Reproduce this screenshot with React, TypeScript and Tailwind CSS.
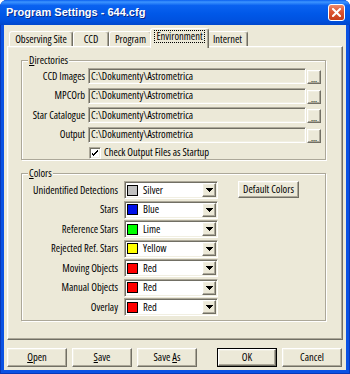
import React from "react"

const raised =
  "border border-t-white border-l-white border-r-[#716F64] border-b-[#716F64] shadow-[inset_-1px_-1px_0_#ACA899,inset_1px_1px_0_#F1EFE2]"
const sunken =
  "border border-t-[#ACA899] border-l-[#ACA899] border-r-white border-b-white shadow-[inset_1px_1px_0_#716F64,inset_-1px_-1px_0_#F1EFE2]"

const dirs = [
  { label: "CCD Images", value: "C:\\Dokumenty\\Astrometrica" },
  { label: "MPCOrb", value: "C:\\Dokumenty\\Astrometrica" },
  { label: "Star Catalogue", value: "C:\\Dokumenty\\Astrometrica" },
  { label: "Output", value: "C:\\Dokumenty\\Astrometrica" },
]

const colors = [
  { label: "Unidentified Detections", name: "Silver", swatch: "bg-[#C0C0C0]" },
  { label: "Stars", name: "Blue", swatch: "bg-[#0010E8]" },
  { label: "Reference Stars", name: "Lime", swatch: "bg-[#00FF00]" },
  { label: "Rejected Ref. Stars", name: "Yellow", swatch: "bg-[#FFFF00]" },
  { label: "Moving Objects", name: "Red", swatch: "bg-[#FF0000]" },
  { label: "Manual Objects", name: "Red", swatch: "bg-[#FF0000]" },
  { label: "Overlay", name: "Red", swatch: "bg-[#FF0000]" },
]

const tabs = [
  { label: "Observing Site", w: "w-[64px]" },
  { label: "CCD", w: "w-[36px]" },
  { label: "Program", w: "w-[43px]" },
  { label: "Environment", w: "w-[59px]", active: true },
  { label: "Internet", w: "w-[41px]" },
]

function Arrow() {
  return (
    <svg width="7" height="4" shapeRendering="crispEdges">
      <rect x="0" y="0" width="7" height="1" fill="#000" />
      <rect x="1" y="1" width="5" height="1" fill="#000" />
      <rect x="2" y="2" width="3" height="1" fill="#000" />
      <rect x="3" y="3" width="1" height="1" fill="#000" />
    </svg>
  )
}

function Button({ children, isDefault }: { children: React.ReactNode; isDefault?: boolean }) {
  if (isDefault) {
    return (
      <div className="w-[60px] h-[19px] border border-black flex">
        <div className={`flex-1 flex items-center justify-center ${raised}`}>{children}</div>
      </div>
    )
  }
  return <div className={`w-[60px] h-[19px] flex items-center justify-center ${raised}`}>{children}</div>
}

export default function App() {
  return (
    <div className="w-[350px] h-[374px] flex flex-col bg-[#0A52E3] rounded-t-[7px] overflow-hidden shadow-[inset_1px_0_0_#0838B8,inset_-1px_0_0_#0838B8,inset_0_-1px_0_#0838B8] font-['Open_Sans',sans-serif] [font-stretch:75%] text-[10.5px] leading-[13px] text-black whitespace-nowrap">
      {/* title bar */}
      <div className="h-[25px] shrink-0 flex items-center justify-between pl-[6px] pr-[5px] bg-[linear-gradient(to_bottom,#0A5FEF_0%,#3D95FF_8%,#0A62F0_22%,#0058E8_55%,#0052E0_80%,#0047CC_100%)]">
        <span className="font-['Liberation_Sans',sans-serif] [font-stretch:normal] font-bold text-[11px] text-white [text-shadow:1px_1px_0_#0A2A8A]">
          Program Settings - 644.cfg
        </span>
        <div className="w-[17px] h-[17px] rounded-[3px] border border-white bg-[linear-gradient(to_bottom,#EC8A6C,#DD5532_45%,#C63D1A)] flex items-center justify-center">
          <svg width="9" height="9" viewBox="0 0 9 9">
            <path d="M1 1L8 8M8 1L1 8" stroke="white" strokeWidth="2" strokeLinecap="square" />
          </svg>
        </div>
      </div>

      {/* client area */}
      <div className="mx-[4px] mb-[4px] flex-1 bg-[#ECE9D8] flex flex-col">
        {/* tabs */}
        <div className="mt-[3px] h-[18px] flex items-end pl-[5px]">
          {tabs.map((t) =>
            t.active ? (
              <div
                key={t.label}
                className={`${t.w} relative z-10 -mx-[2px] -mb-[2px] h-[20px] bg-[#ECE9D8] border-t border-l border-r border-t-white border-l-white border-r-[#716F64] rounded-t-[3px] shadow-[inset_-1px_0_0_#ACA899] flex justify-center pt-[1px]`}
              >
                <span className="h-[13px] leading-[11px] px-[1px] border border-dotted border-black">{t.label}</span>
              </div>
            ) : (
              <div
                key={t.label}
                className={`${t.w} h-[15px] border-t border-l border-r border-t-white border-l-white border-r-[#716F64] rounded-t-[3px] shadow-[inset_-1px_0_0_#ACA899] flex items-center justify-center`}
              >
                {t.label}
              </div>
            )
          )}
        </div>

        {/* tab page */}
        <div className={`mx-[3px] h-[294px] ${raised}`}>
          <fieldset className="ml-[13px] mt-[7px] w-[305px] border border-[#ACA899] shadow-[inset_1px_1px_0_white,1px_1px_0_white]">
            <legend className="ml-[6px] px-[1px] leading-[12px] bg-[#ECE9D8]">
              <u>D</u>irectories
            </legend>
            <div className="pt-[2px] flex flex-col gap-[3.5px]">
              {dirs.map((d) => (
                <div key={d.label} className="flex items-center h-[16px]">
                  <div className="w-[63px] text-right">{d.label}</div>
                  <div className={`ml-[3px] w-[218px] h-[16px] pl-[2px] flex items-center ${sunken}`}>{d.value}</div>
                  <div className={`ml-[1px] w-[14px] h-[14px] mt-[2px] flex items-end justify-center leading-[9px] text-[9px] ${raised}`}>
                    ...
                  </div>
                </div>
              ))}
              <div className="flex items-center h-[13px] pl-[67px]">
                <div className="w-[12px] h-[12px] bg-white border border-t-[#ACA899] border-l-[#ACA899] border-r-white border-b-white shadow-[inset_1px_1px_0_#716F64,inset_-1px_-1px_0_#F1EFE2] flex items-center justify-center">
                  <svg width="8" height="8" viewBox="0 0 8 8" shapeRendering="crispEdges">
                    <path d="M1 3v3h1v1h1v-1h1v-1h1v-1h1v-1h1v-2h-1v1h-1v1h-1v1h-1v1h-1v-1h-1v-1z" fill="#000" />
                  </svg>
                </div>
                <span className="ml-[3px]">Check Output Files as Startup</span>
              </div>
            </div>
          </fieldset>

          <fieldset className="ml-[13px] mt-[7px] w-[305px] border border-[#ACA899] shadow-[inset_1px_1px_0_white,1px_1px_0_white]">
            <legend className="ml-[6px] px-[1px] leading-[12px] bg-[#ECE9D8]">
              <u>C</u>olors
            </legend>
            <div className="pt-[2px] pb-[4px] flex items-start">
              <div className="flex flex-col gap-[1.5px]">
                {colors.map((c) => (
                  <div key={c.label} className="flex items-center h-[18px]">
                    <div className="w-[96px] text-right">{c.label}</div>
                    <div className={`ml-[6px] w-[94px] h-[18px] bg-white flex items-center pl-[2px] ${sunken}`}>
                      <div className={`w-[11px] h-[11px] border border-black ${c.swatch}`} />
                      <span className="ml-[5px] flex-1">{c.name}</span>
                      <div className={`w-[14px] h-[14px] mr-[1px] flex items-center justify-center bg-[#ECE9D8] ${raised}`}>
                        <Arrow />
                      </div>
                    </div>
                  </div>
                ))}
              </div>
              <div className={`ml-[20px] w-[61px] h-[17px] flex items-center justify-center ${raised}`}>
                Default Colors
              </div>
            </div>
          </fieldset>
        </div>

        {/* bottom buttons */}
        <div className="mt-[8px] flex pl-[3px]">
          <div className="flex gap-[5px]">
            <Button>
              <span>
                <u>O</u>pen
              </span>
            </Button>
            <Button>
              <span>
                <u>S</u>ave
              </span>
            </Button>
            <Button>
              <span>
                Save <u>A</u>s
              </span>
            </Button>
          </div>
          <div className="ml-[20px] flex gap-[5px]">
            <Button isDefault>OK</Button>
            <Button>Cancel</Button>
          </div>
        </div>
      </div>
    </div>
  )
}
